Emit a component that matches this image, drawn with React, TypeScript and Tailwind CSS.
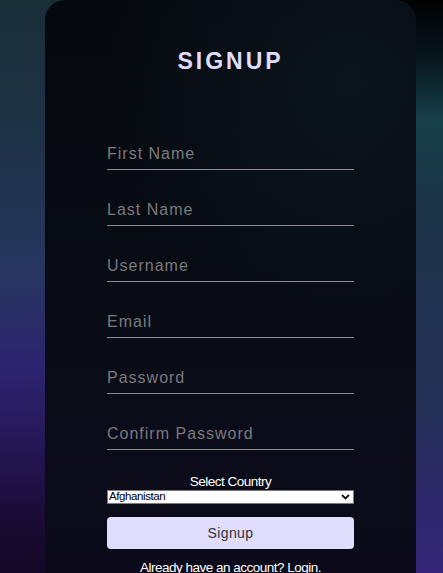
const fields = [
  { id: 'firstName', label: 'First Name', type: 'text' },
  { id: 'lastName', label: 'Last Name', type: 'text' },
  { id: 'username', label: 'Username', type: 'text' },
  { id: 'email', label: 'Email', type: 'email' },
  { id: 'password', label: 'Password', type: 'password' },
  { id: 'confirmPassword', label: 'Confirm Password', type: 'password' },
];

function ChevronDown() {
  return (
    <svg width="9" height="6" viewBox="0 0 9 6" className="shrink-0">
      <polyline points="1,1 4.5,4.5 8,1" fill="none" stroke="#111" strokeWidth="1.8" />
    </svg>
  );
}

export default function App() {
  return (
    <div className="flex h-[573px] w-[443px] overflow-hidden bg-[linear-gradient(to_right,#1a2e38_0%,#1a2e38_14%,#0b161c_50%,#020304_86%,#020304_100%)] font-['Liberation_Sans',Arial,sans-serif]">
      {/* left backdrop */}
      <div className="h-full w-[45px] shrink-0 bg-[linear-gradient(to_bottom,#1a2e38_0%,#1f3348_25%,#283660_48%,#2d2470_64%,#251656_78%,#1a0c36_90%,#140826_100%)]" />

      <div className="flex h-full w-[371px] shrink-0 flex-col items-center rounded-t-[20px] bg-[radial-gradient(circle_at_82%_14%,rgba(28,62,80,0.22),transparent_42%),linear-gradient(to_bottom,#05090d_0%,#070b12_40%,#0a0c18_70%,#0c0a1a_100%)] px-[62px] pt-[50px]">
        <h1 className="text-[23px] font-bold leading-none tracking-[3px] text-[#e1ddff]">SIGNUP</h1>

        <form className="mt-[65px] flex w-full flex-col">
          {fields.map((f) => (
            <input
              key={f.id}
              id={f.id}
              type={f.type}
              placeholder={f.label}
              className="mb-[24px] h-[32px] w-full border-b-[1.5px] border-[#8e8e94] bg-transparent text-[16px] tracking-[1px] text-[#cfcfcf] outline-none placeholder:text-[#7a7a7e]"
            />
          ))}

          <label className="text-center text-[13.5px] leading-[16px] tracking-[-0.5px] text-white">
            Select Country
          </label>
          <div className="flex h-[14px] w-full items-center justify-between border border-[#7a7a7a] bg-white pl-[1px] pr-[3px]">
            <span className="text-[11.5px] leading-none tracking-[-0.4px] text-black">Afghanistan</span>
            <ChevronDown />
          </div>

          <button
            type="button"
            className="mt-[13px] h-[32px] w-full rounded-[4px] bg-[#e0dcfb] text-[14px] tracking-[0.4px] text-[#333338]"
          >
            Signup
          </button>

          <p className="mt-[11px] text-center text-[13.5px] leading-[16px] tracking-[-0.5px] text-white">
            Already have an account? Login.
          </p>
        </form>
      </div>

      {/* right backdrop */}
      <div className="h-full flex-1 bg-[linear-gradient(to_bottom,#010203_0%,#06121a_9%,#17404b_21%,#1c3446_36%,#223352_52%,#253158_72%,#2f286c_88%,#35267a_100%)]" />
    </div>
  );
}
